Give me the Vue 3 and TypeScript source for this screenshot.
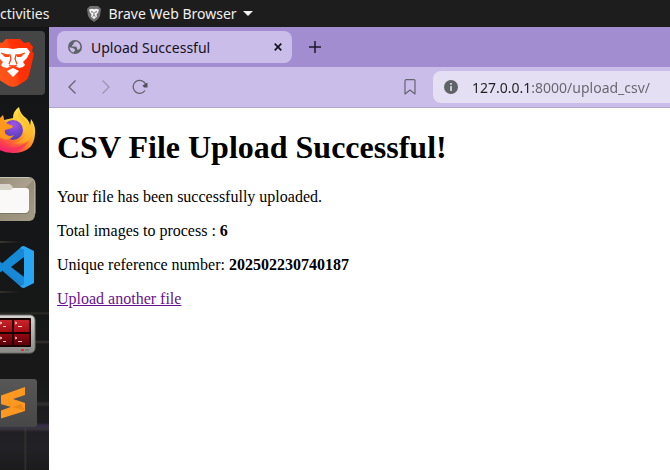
<script setup lang="ts">
import { ref } from 'vue'

const address = ref('127.0.0.1:8000/upload_csv/')
const imageCount = 6
const referenceNumber = '202502230740187'
</script>

<template>
  <div class="desktop">
    <header class="topbar">
      <button class="activities" type="button">ctivities</button>
      <button class="appmenu" type="button">
        <svg width="16" height="18" viewBox="0 0 16 18" aria-hidden="true">
          <path d="M4 1h8l3 3-1 7-2 3-4 3-4-3-2-3-1-7z" fill="#707070" />
          <path d="M3 4.500l3-.8 2 .6 2-.6 3 .8-.8 2.800-1.700 2.200.5 2-3 2.500-3-2.500.5-2L3.800 7.300z" fill="#f4f4f4" />
          <path d="M5 6.500l2 .8M11 6.500l-2 .8M8 7v3M6.500 11.300L8 10.500l1.500.8" stroke="#666" fill="none" />
        </svg>
        <span>Brave Web Browser</span>
        <svg class="caret" width="10" height="5" viewBox="0 0 10 5" aria-hidden="true"><path d="M0 0h10L5 5z" fill="#f2f2f2" /></svg>
      </button>
    </header>

    <div class="workspace">
      <nav class="dock" aria-label="Dock">
        <button type="button" aria-label="Brave">
          <svg viewBox="0 29 49 68">
            <defs>
              <linearGradient id="brave" x1="0" x2="1" y1="0.6" y2="0.3">
                <stop offset="0" stop-color="#ff5a1c" /><stop offset="0.45" stop-color="#ff4a16" /><stop offset="0.55" stop-color="#ff3208" /><stop offset="1" stop-color="#ff2a00" />
              </linearGradient>
            </defs>
            <rect x="-19" y="31" width="64" height="64" rx="4" fill="#454545" />
            <path d="M6 39h14l4 4 5-1 4 5-1 4 2 3-5 21q-1 4-4 6l-8 5-4 1-4-1-8-5q-3-2-4-6l-5-21 2-3-1-4 4-5 5 1z" fill="url(#brave)" />
            <path d="M13 49l6-1h8l3 4-3 6-4 4 2 3-2 2-4 1-6-3-6 3-4-1-2-2 2-3-4-4-3-6 3-4h8z" fill="#fff" />
            <path d="M13 68l6 3-6 6-6-6z" fill="#fff" />
            <path d="M25 53l-6 2h-3l-1 4 2 5M1 53l6 2h3l1 4-2 5M9 65l4 1.500 4-1.500" fill="none" stroke="#ff4310" stroke-width="1.300" />
            <path d="M17 55l7-1-3 3h-4zM9 55l-7-1 3 3h4z" fill="#ff4310" />
          </svg>
        </button>
        <button type="button" aria-label="Firefox">
          <svg viewBox="0 97 49 68">
            <defs>
              <linearGradient id="flame" x1="0.8" x2="0.2" y1="0" y2="1">
                <stop offset="0" stop-color="#fff44f" /><stop offset="0.35" stop-color="#ffc533" /><stop offset="0.6" stop-color="#ff8420" /><stop offset="0.8" stop-color="#ff3f50" /><stop offset="1" stop-color="#f01880" />
              </linearGradient>
              <radialGradient id="globe" cx="0.55" cy="0.25" r="0.8">
                <stop offset="0" stop-color="#a055e8" /><stop offset="0.5" stop-color="#7546cf" /><stop offset="1" stop-color="#493bb0" />
              </radialGradient>
            </defs>
            <path d="M-11 131q0-9 6-15l3 4 5-5 1 5 9-2q0-7 6-11 1 7 7 11 4 4 4 8l1-7q5 7 4 15-1 19-22 19-24-1-24-22z" fill="url(#flame)" />
            <circle cx="13" cy="130" r="10" fill="url(#globe)" />
            <path d="M-9 121l5 1 7-6 1 5 2 2 7 3-1 2-7 2q-1 3 2 5 3 2 7 0-4 6-11 4-6-2-7-9z" fill="#ff971d" />
            <path d="M19 109q-4 7 4 13 5 5 2 13-3 7-12 8 19 3 21-14l-2-7-2 6q-2-7-6-10-5-4-5-9z" fill="#ffb52c" opacity="0.55" />
            <path d="M-6 142q15 12 35-1-8 12-18 11-10 0-17-10z" fill="#f52b67" opacity="0.65" />
          </svg>
        </button>
        <button type="button" aria-label="Files">
          <svg viewBox="0 165 49 68">
            <defs>
              <linearGradient id="folder" x1="0" x2="1" y1="0" y2="1">
                <stop offset="0" stop-color="#928a77" /><stop offset="0.5" stop-color="#aaa28e" /><stop offset="0.52" stop-color="#958d7a" /><stop offset="1" stop-color="#a59c87" />
              </linearGradient>
            </defs>
            <rect x="-12" y="178" width="47" height="43" rx="6" fill="url(#folder)" />
            <path d="M-12 177.500h40q7 0 7 7v29" fill="none" stroke="#cbc4b5" />
            <path d="M-5 186q0-2 2-2H9q2 0 4 4v3H-5z" fill="#d9d4c9" />
            <path d="M-5 190H10q2 0 3-2h13q3 0 3 3v19q0 3-3 3H-5z" fill="#faf9f7" />
            <path d="M-5 213.500h31q3 0 3-3" fill="none" stroke="#817967" />
          </svg>
        </button>
        <button type="button" aria-label="Visual Studio Code">
          <svg viewBox="0 233 49 68">
            <path d="M-10 260l4-3 30 23v8q-2 0-4-2z" fill="#1b82cb" />
            <path d="M-10 274l4 3 30-23v-8q-2 0-4 2z" fill="#148ad7" />
            <path d="M20 248q2-2 4-2l10 5v32l-10 5q-2 0-4-2 4-1 4-4v-30q0-3-4-4z" fill="#2aa5f2" />
            <path d="M0 267l24-18v8l-13 10 13 10v8z" fill="#1689d7" />
          </svg>
        </button>
        <button type="button" aria-label="Terminator">
          <svg viewBox="0 301 49 68">
            <defs>
              <linearGradient id="shell" x1="0" x2="0" y1="0" y2="1"><stop offset="0" stop-color="#d5d5d2" /><stop offset="1" stop-color="#888985" /></linearGradient>
              <linearGradient id="pane" x1="0" x2="0" y1="0" y2="1"><stop offset="0" stop-color="#c8232a" /><stop offset="1" stop-color="#a80c14" /></linearGradient>
              <linearGradient id="paneLow" x1="0" x2="0" y1="0" y2="1"><stop offset="0" stop-color="#940810" /><stop offset="1" stop-color="#5c0007" /></linearGradient>
            </defs>
            <rect x="-10" y="315" width="45" height="38" rx="5" fill="url(#shell)" stroke="#717270" />
            <rect x="-6" y="318" width="37" height="29" rx="1" fill="#1a0000" />
            <path d="M-6 320h18v12H-6zM14 320h15v12H14z" fill="url(#pane)" />
            <path d="M-6 334h18v11H-6zM14 334h15v11H14z" fill="url(#paneLow)" />
            <path d="M0 322l2 1-2 1M15 322l2 1-2 1M0 337l2 1-2 1M15 337l2 1-2 1M3 326.500h3M18 326.500h4M3 341.500h3M18 341.500h4" fill="none" stroke="#f3cdcd" />
            <rect x="21" y="349" width="3" height="2" fill="#f3222d" />
            <rect x="25" y="349" width="4" height="2" fill="#777" />
          </svg>
        </button>
        <button type="button" aria-label="Sublime Text">
          <svg viewBox="0 369 49 68">
            <defs><linearGradient id="slate" x1="0" x2="0" y1="0" y2="1"><stop offset="0" stop-color="#575757" /><stop offset="1" stop-color="#474747" /></linearGradient></defs>
            <rect x="-11" y="379" width="48" height="48" rx="3" fill="url(#slate)" />
            <path d="M1 404l15-2 9 3v6L1 418.500v-8l11-4z" fill="#ff9820" />
            <path d="M25 387v8l-12 4 12 4v8L1 404v-8.500z" fill="#ff9820" />
            <path d="M12 407l9-3 4 6.500z" fill="#ec8614" />
          </svg>
        </button>
      </nav>

      <main class="browser">
        <div class="tabstrip">
          <div class="tab">
            <svg width="14" height="14" viewBox="0 0 14 14" aria-hidden="true">
              <circle cx="7" cy="7" r="7" fill="#5f6368" />
              <path d="M7.500 1.500L5.500 3v1.500L4 5.500v1h4L9 8v1.500h2L12.300 8Q12.800 3.500 9 1.800zM1.500 7.200L5 8l2 1.500v1.200l-1 .5v1.400Q1.800 12 1.500 7.200z" fill="#cbbde9" />
            </svg>
            <span class="title">Upload Successful</span>
            <button type="button" aria-label="Close tab">
              <svg width="8" height="8" viewBox="0 0 8 8"><path d="M.7.7l6.600 6.600M7.300.7L.7 7.300" stroke="#17131e" stroke-width="1.700" /></svg>
            </button>
          </div>
          <button type="button" aria-label="New tab">
            <svg width="12" height="12" viewBox="0 0 12 12"><path d="M6 0v12M0 6h12" stroke="#1d1727" stroke-width="1.500" /></svg>
          </button>
        </div>

        <div class="toolbar">
          <div class="history">
            <button type="button" aria-label="Back">
              <svg width="16" height="16" viewBox="0 0 16 16"><path d="M11.500 1.500L5 8l6.500 6.500" fill="none" stroke="#64606d" stroke-width="1.300" /></svg>
            </button>
            <button type="button" aria-label="Forward" disabled>
              <svg width="16" height="16" viewBox="0 0 16 16"><path d="M4.500 1.500L11 8l-6.500 6.500" fill="none" stroke="#9e92b5" stroke-width="1.300" /></svg>
            </button>
            <button type="button" aria-label="Reload">
              <svg width="16" height="16" viewBox="0 0 16 16"><path d="M13.500 5A6.500 6.500 0 1 0 13 11.500" fill="none" stroke="#64606d" stroke-width="1.300" /><path d="M15.500 3.500v5h-3.500l-1.500-2z" fill="#55515c" /></svg>
            </button>
          </div>
          <button class="bookmark" type="button" aria-label="Bookmark this page">
            <svg width="12" height="16" viewBox="0 0 12 16"><path d="M1 15V2q0-1.300 1.300-1.300h7.400Q11 .7 11 2v13l-5-4z" fill="none" stroke="#67636f" stroke-width="1.200" stroke-linejoin="round" /></svg>
          </button>
          <label class="omnibox">
            <svg width="14" height="14" viewBox="0 0 14 14" aria-hidden="true"><circle cx="7" cy="7" r="7" fill="#5f6368" /><path d="M7 6v5M7 3v1.800" stroke="#e4dff2" stroke-width="1.600" /></svg>
            <input v-model="address" type="text" aria-label="Address" spellcheck="false" />
          </label>
        </div>

        <article class="page">
          <h1>CSV File Upload Successful!</h1>
          <p>Your file has been successfully uploaded.</p>
          <p>Total images to process : <strong>{{ imageCount }}</strong></p>
          <p>Unique reference number: <strong>{{ referenceNumber }}</strong></p>
          <a href="#upload">Upload another file</a>
        </article>
      </main>
    </div>
  </div>
</template>

<style>
body {
  margin: 0;
}
</style>

<style scoped>
.desktop {
  display: flex;
  flex-direction: column;
  min-height: 100vh;
  overflow: hidden;
  background: #151617;
  font-family: "Noto Sans", "Open Sans", sans-serif;
  font-size: 14px;
}
button {
  display: flex;
  align-items: center;
  justify-content: center;
  padding: 0;
  border: 0;
  background: none;
  color: inherit;
  font: inherit;
}
svg {
  display: block;
  flex: none;
}
.topbar {
  display: flex;
  align-items: center;
  gap: 37px;
  height: 27px;
  background: #1d1d1d;
  color: #f0f0f0;
}
.appmenu {
  gap: 6px;
}
.workspace {
  display: flex;
  flex: 1;
}
.dock {
  display: flex;
  flex-direction: column;
  width: 49px;
  padding-top: 2px;
  background:
    linear-gradient(#0000 396px, #49396b88 398px, #48434d99 402px, #0000 405px),
    linear-gradient(#0000 374px, #4a454288 377px, #0000 380px),
    linear-gradient(#0000 313px, #35342f 315px, #0000 317px),
    linear-gradient(#0000 285px, #302f29 286px, #0000 288px),
    linear-gradient(90deg, #33312b, #0000 20px) 0 264px / 49px 2px no-repeat,
    linear-gradient(90deg, #3a372f, #0000 20px) 0 214px / 49px 2px no-repeat,
    linear-gradient(90deg, #0000 24px, #4a443a88 25px, #0000 27px) 0 400px no-repeat,
    linear-gradient(#141516, #151617 200px, #171817 350px, #222126 420px, #1b1b1c);
}
.dock svg {
  width: 49px;
  height: 68px;
}
.browser {
  display: flex;
  flex: 1;
  flex-direction: column;
  min-width: 0;
  background: #fff;
}
.tabstrip {
  display: flex;
  align-items: center;
  gap: 17px;
  height: 40px;
  padding-left: 8px;
  background: #a28dd0;
  color: #15111c;
}
.tab {
  display: flex;
  align-items: center;
  gap: 9px;
  box-sizing: border-box;
  width: 235px;
  height: 32px;
  padding: 0 10px 0 11px;
  border-radius: 8px;
  background: #cbbde9;
}
.title {
  flex: 1;
}
.toolbar {
  display: flex;
  align-items: center;
  height: 40px;
  padding-left: 15px;
  border-bottom: 1px solid #b1a7c5;
  background: #cbbde9;
}
.history {
  display: flex;
  flex: 1;
  gap: 18px;
}
.bookmark {
  margin-right: 17px;
}
.omnibox {
  display: flex;
  align-items: center;
  gap: 14px;
  box-sizing: border-box;
  width: 237px;
  height: 32px;
  padding-left: 11px;
  border-radius: 8px 0 0 8px;
  background: #e4dff2;
}
.omnibox input {
  flex: 1;
  min-width: 0;
  padding: 0;
  border: 0;
  outline: 0;
  background: linear-gradient(90deg, #202124 60px, #66636f 60px) text;
  color: transparent;
  font: inherit;
}
.page {
  padding: 0 8px;
  color: #000;
  font: 16px/18px "Liberation Serif", serif;
}
h1 {
  margin: 21px 0 22px;
  font-size: 32px;
  line-height: 37px;
}
p {
  margin: 16px 0;
}
a {
  color: #681090;
}
</style>
